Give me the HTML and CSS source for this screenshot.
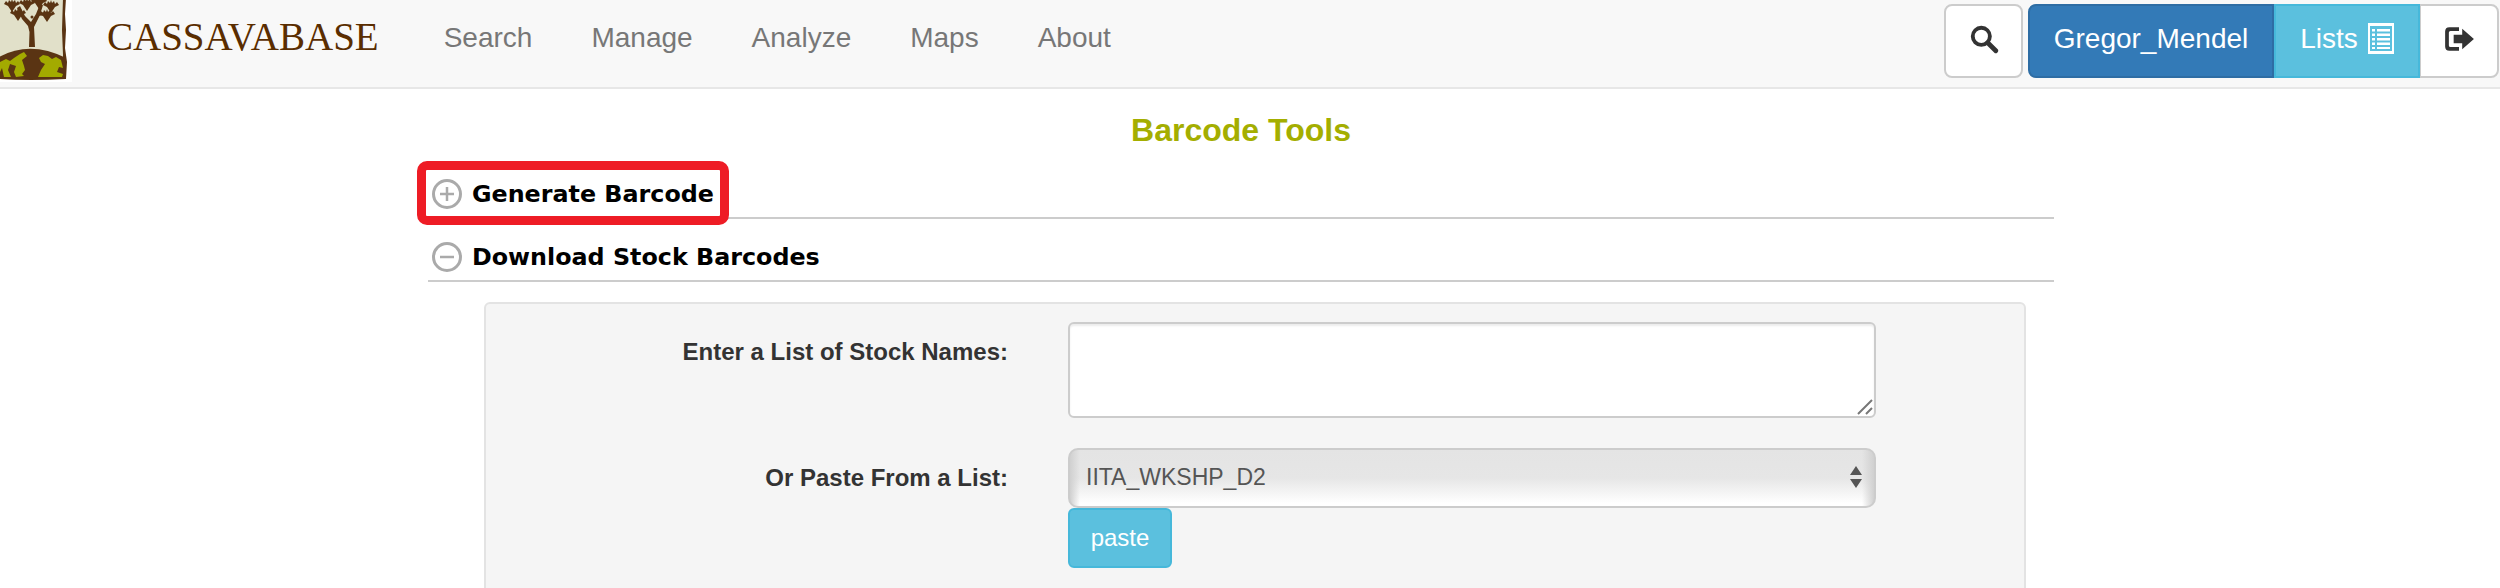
FILE: index.html
```html
<!DOCTYPE html>
<html lang="en">
<head>
<meta charset="utf-8">
<title>Barcode Tools</title>
<link rel="stylesheet" href="styles.css">
</head>
<body>
<header class="navbar">
  <a class="logo" href="#">
    <svg width="72" height="82" viewBox="0 0 72 82">
      <defs>
        <path id="leaf" d="M-8 -2 L-6 -5 L-4 -3 L-3 -6 L-1 -4 L0 -7 L1 -4 L3 -6 L4 -3 L6 -5 L8 -2 L4 0 L2 3 L0 6 L-2 3 L-4 0Z"/>
      </defs>
      <rect width="72" height="82" fill="#fff"/>
      <rect x="-2" y="-2" width="66" height="80" fill="#e1e0c9"/>
      <path d="M63 -2 L66 -2 L65 14 L66 30 L65 48 L67 62 L66 79 L62 79 L63 55 L62 30Z" fill="#5a3413"/>
      <path d="M-1 79 L-1 57 Q30 40 66 58 L66 79 Q30 81 -1 79Z" fill="#5a3413"/>
      <path d="M0 62 L6 59 L10 61 L14 58 L20 54 L24 52 L27 56 L22 60 L24 66 L25 70 L22 74 L24 76 L16 77 L14 72 L16 66 L10 64 L8 70 L11 77 L4 77 L2 68 L0 72Z" fill="#a3aa00"/>
      <path d="M39 58 L43 55 L48 56 L52 59 L56 57 L61 60 L63 68 L59 67 L57 72 L63 74 L62 77 L38 77 L41 70 L45 64 L41 62Z" fill="#a3aa00"/>
      <path d="M29 47 L29.500 32 L28 26 L22 19 L17 8 L20 6 L25 16 L31 22 L36 14 L40 4 L43 5 L40 15 L34 27 L35 47Z" fill="#5a3413"/>
      <path d="M22 16 L14 14 L14 12 L23 13Z M38 13 L47 12 L47 15 L37 16Z" fill="#5a3413"/>
      <g fill="#5a3413">
        <use href="#leaf" transform="translate(12 6)"/>
        <use href="#leaf" transform="translate(27 5)"/>
        <use href="#leaf" transform="translate(39 3)"/>
        <use href="#leaf" transform="translate(51 7)"/>
        <use href="#leaf" transform="translate(47 16)"/>
        <use href="#leaf" transform="translate(18 15)"/>
      </g>
      <circle cx="32" cy="17" r="1.500" fill="#5a3413"/>
    </svg>
  </a>
  <a class="brand" href="#">CASSAVABASE</a>
  <nav class="menu">
    <a href="#">Search</a>
    <a href="#">Manage</a>
    <a href="#">Analyze</a>
    <a href="#">Maps</a>
    <a href="#">About</a>
  </nav>
  <div class="tools">
    <button class="btn btn-search" type="button" aria-label="Search">
      <svg width="30" height="30" viewBox="0 0 28 28"><circle cx="11.500" cy="11.500" r="8" fill="none" stroke="#333" stroke-width="3.600"/><path d="M17.500 17.500 L25 25" stroke="#333" stroke-width="4.400" stroke-linecap="round"/></svg>
    </button>
    <div class="group">
      <a class="seg seg-user" href="#">Gregor_Mendel</a>
      <a class="seg seg-lists" href="#">Lists
        <svg width="26" height="31" viewBox="0 0 26 31"><rect width="26" height="31" fill="#fff"/><rect x="2" y="3" width="22" height="25" fill="#5bc0de"/><path d="M4 6h3v2.500h-3zM9 6h13v2.500h-13zM4 10.500h3v2.500h-3zM9 10.500h13v2.500h-13zM4 15h3v2.500h-3zM9 15h13v2.500h-13zM4 19.500h3v2.500h-3zM9 19.500h13v2.500h-13zM4 24h3v2h-3zM9 24h13v2h-13z" fill="#fff"/></svg>
      </a>
      <a class="seg seg-logout" href="#" aria-label="Log out">
        <svg width="32" height="32" viewBox="0 0 30 30"><path d="M15 4H6Q2 4 2 8V22Q2 26 6 26H15V22.500H7Q5.500 22.500 5.500 21V9Q5.500 7.500 7 7.500H15Z" fill="#333"/><path d="M10 11H18V5.500L29 15L18 24.500V19H10Z" fill="#333"/></svg>
      </a>
    </div>
  </div>
</header>
<main class="page">
  <h1 class="title">Barcode Tools</h1>
  <section class="section section-first">
    <h2 class="section-head">
      <svg class="toggle" width="30" height="30" viewBox="0 0 30 30"><circle cx="15" cy="15" r="13.500" fill="#fff" stroke="#aaa" stroke-width="3"/><path d="M15 8V22M8 15H22" stroke="#aaa" stroke-width="2.500"/></svg>
      <span>Generate Barcode</span>
    </h2>
    <div class="callout"></div>
  </section>
  <section class="section">
    <h2 class="section-head">
      <svg class="toggle" width="30" height="30" viewBox="0 0 30 30"><circle cx="15" cy="15" r="13.500" fill="#fff" stroke="#aaa" stroke-width="3"/><path d="M8 15H22" stroke="#aaa" stroke-width="2.500"/></svg>
      <span>Download Stock Barcodes</span>
    </h2>
  </section>
  <form class="panel">
    <div class="row row-area">
      <label class="label">Enter a List of Stock Names:</label>
      <div class="area">
        <svg class="grip" width="16" height="16" viewBox="0 0 16 16"><path d="M1 15L15 1M9 15L15 9" stroke="#777" stroke-width="2"/></svg>
      </div>
    </div>
    <div class="row">
      <label class="label">Or Paste From a List:</label>
      <div class="field">
        <div class="select">
          <span>IITA_WKSHP_D2</span>
          <svg class="arrows" width="12" height="22" viewBox="0 0 12 22"><path d="M6 0L12 9H0ZM0 13H12L6 22Z" fill="#555"/></svg>
        </div>
        <button class="paste" type="button">paste</button>
      </div>
    </div>
  </form>
</main>
</body>
</html>
```
FILE: styles.css
```css
* { box-sizing: border-box; }
html, body { margin: 0; height: 588px; overflow: hidden; background: #fff; }
body { font-family: "Liberation Sans", Arial, sans-serif; color: #333; }
a { text-decoration: none; }

.navbar {
  display: flex;
  align-items: flex-start;
  height: 89px;
  background: #f8f8f8;
  border-bottom: 2px solid #e7e7e7;
}
.logo { display: block; width: 72px; height: 82px; flex: none; }
.logo svg { display: block; }
.brand {
  margin-left: 35px;
  font-family: "Liberation Serif", "Times New Roman", serif;
  font-size: 39px;
  line-height: 74px;
  color: #5a2d00;
}
.menu { display: flex; gap: 59px; margin-left: 65px; }
.menu a { font-size: 28px; line-height: 76px; color: #777; }

.tools { display: flex; gap: 5px; margin-left: auto; margin-right: 1px; padding-top: 4px; }
.btn {
  width: 79px;
  height: 74px;
  padding: 0 0 5px;
  display: flex;
  align-items: center;
  justify-content: center;
  background: #fff;
  border: 2px solid #ccc;
  border-radius: 8px;
}
.group { display: flex; height: 74px; }
.seg {
  display: flex;
  align-items: center;
  justify-content: center;
  padding-bottom: 5px;
  font-size: 28px;
  color: #fff;
  border: 2px solid;
}
.seg-user { width: 246px; background: #337ab7; border-color: #2e6da4; border-radius: 8px 0 0 8px; }
.seg-lists { width: 146px; gap: 10px; background: #5bc0de; border-color: #46b8da; }
.seg-logout { width: 79px; background: #fff; border-color: #ccc; border-left-width: 1px; border-radius: 0 8px 8px 0; }

.page { width: 1626px; margin-left: 428px; }
.title {
  margin: 0;
  height: 78px;
  text-align: center;
  font-size: 32px;
  line-height: 82px;
  font-weight: 700;
  color: #a4ae00;
}
.section { position: relative; height: 63px; border-bottom: 2px solid #ccc; }
.section-first { height: 52px; }
.section-head {
  display: flex;
  align-items: center;
  gap: 10px;
  height: 100%;
  margin: 0;
  padding: 15px 0 0 4px;
  font-family: "DejaVu Sans", Verdana, sans-serif;
  font-size: 23.800px;
  font-weight: 700;
  color: #000;
}
.section-first .section-head { padding-top: 3px; }
.toggle { flex: none; }
.callout {
  position: absolute;
  left: -11px;
  top: -6px;
  width: 312px;
  height: 64px;
  border: 9px solid #ee1c25;
  border-radius: 10px;
}

.panel {
  width: 1542px;
  height: 320px;
  margin: 20px 0 0 56px;
  padding: 18px 0 0;
  background: #f5f5f5;
  border: 2px solid #e3e3e3;
  border-radius: 6px;
}
.row { display: flex; align-items: flex-start; gap: 60px; }
.row-area { height: 126px; }
.label {
  width: 522px;
  flex: none;
  font-size: 24px;
  font-weight: 700;
  line-height: 27px;
  text-align: right;
  padding-top: 16px;
}
.area {
  position: relative;
  width: 808px;
  height: 96px;
  background: #fff;
  border: 2px solid #ccc;
  border-radius: 6px;
  box-shadow: inset 0 2px 2px rgba(0, 0, 0, .075);
}
.grip { position: absolute; right: 1px; bottom: 1px; }
.field { width: 808px; }
.select {
  display: flex;
  align-items: center;
  justify-content: space-between;
  height: 60px;
  padding: 0 12px 2px 16px;
  font-size: 23px;
  color: #555;
  border: 2px solid #ccc;
  border-radius: 10px;
  background:
    linear-gradient(90deg, #d0d0d0, rgba(208, 208, 208, 0) 10px, rgba(208, 208, 208, 0) calc(100% - 12px), #d0d0d0),
    linear-gradient(#e4e4e4, #e6e6e6 50%, #fff 95%);
}
.paste {
  display: block;
  width: 104px;
  height: 60px;
  padding: 0;
  font-family: inherit;
  font-size: 24px;
  color: #fff;
  background: #5bc0de;
  border: 2px solid #46b8da;
  border-radius: 6px;
}
```
